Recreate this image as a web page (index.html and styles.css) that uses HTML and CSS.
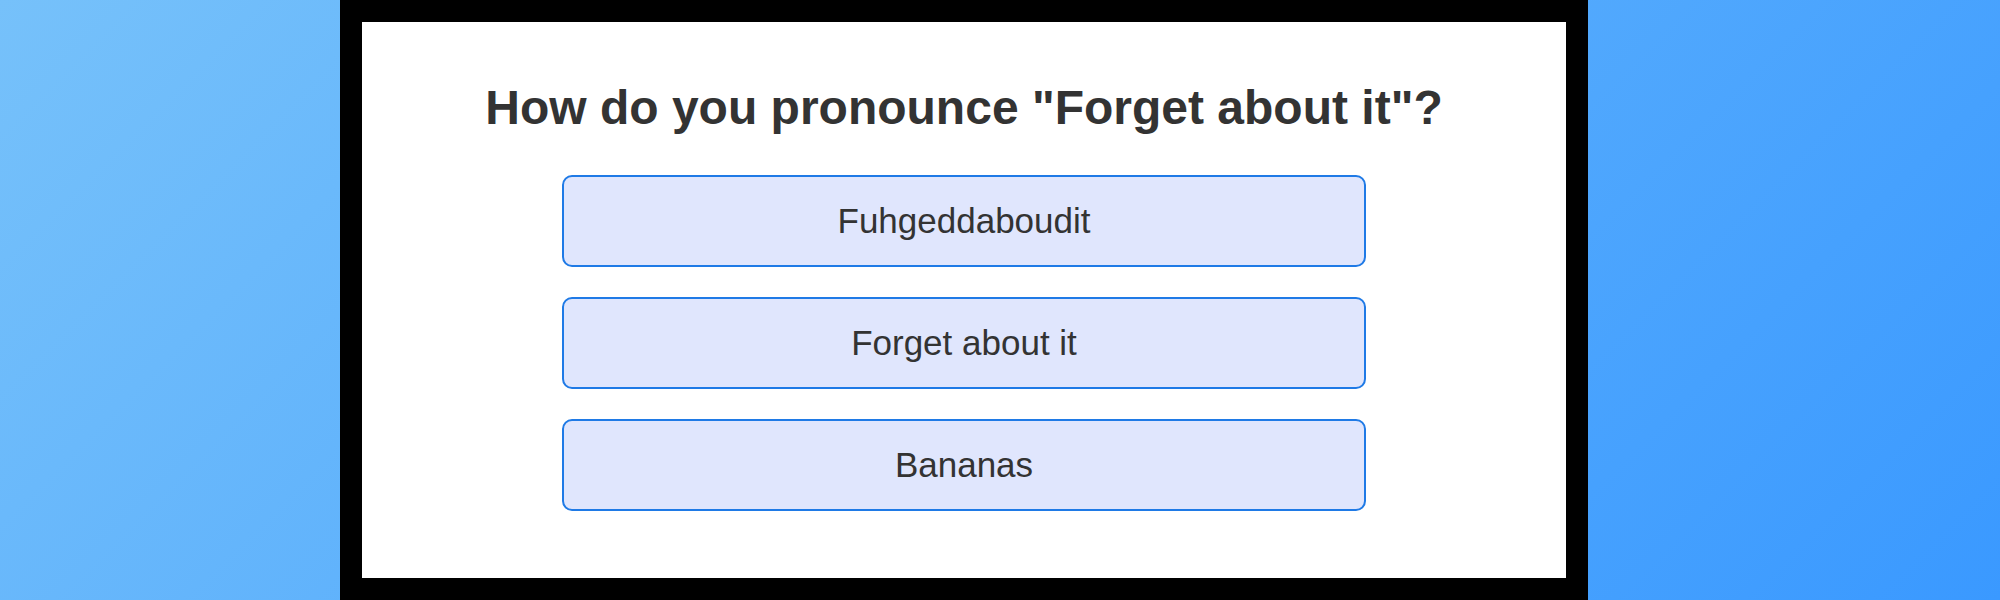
FILE: index.html
```html
<!DOCTYPE html>
<html lang="en">
<head>
<meta charset="utf-8">
<title>Quiz</title>
<link rel="stylesheet" href="styles.css">
</head>
<body>
  <main class="frame">
    <h1 class="question">How do you pronounce "Forget about it"?</h1>
    <div class="options">
      <button class="option">Fuhgeddaboudit</button>
      <button class="option">Forget about it</button>
      <button class="option">Bananas</button>
    </div>
  </main>
</body>
</html>
```

FILE: styles.css
```css
html, body {
  margin: 0;
  padding: 0;
}

body {
  height: 600px;
  overflow: hidden;
  display: flex;
  padding-left: 340px;
  box-sizing: border-box;
  background: linear-gradient(135deg, #76c1fa 0%, #3a99ff 100%);
  font-family: "Liberation Sans", Arial, sans-serif;
}

.frame {
  box-sizing: border-box;
  width: 1248px;
  height: 600px;
  border: 22px solid #000;
  background: #fff;
  display: flex;
  flex-direction: column;
  align-items: center;
  padding-top: 58px;
}

.question {
  margin: 0;
  font-size: 48px;
  line-height: 55px;
  font-weight: 700;
  color: #333;
}

.options {
  margin-top: 40px;
  width: 804px;
  display: flex;
  flex-direction: column;
  gap: 30px;
}

.option {
  box-sizing: border-box;
  height: 92px;
  border: 2px solid #1f7ae6;
  border-radius: 10px;
  background: #e0e6fd;
  color: #333;
  font-family: "Liberation Sans", Arial, sans-serif;
  font-size: 35px;
  padding: 0;
}
```
